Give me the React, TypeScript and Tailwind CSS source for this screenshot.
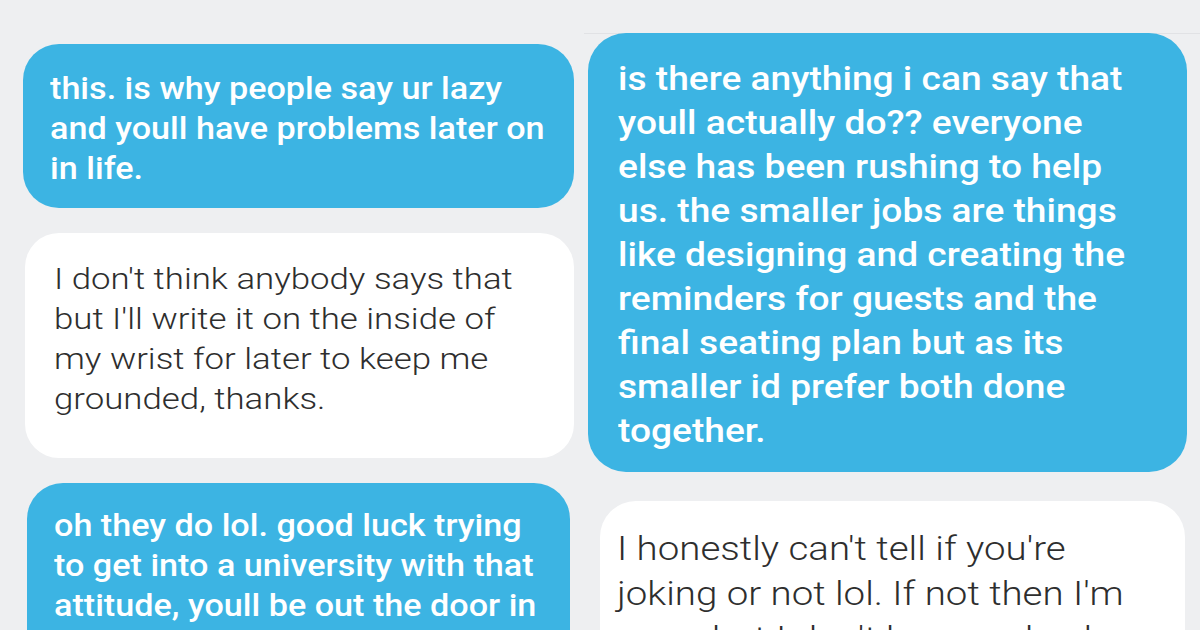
const leftTop = ['this. is why people say ur lazy', 'and youll have problems later on', 'in life.'];
const leftReply = [
  "I don't think anybody says that",
  "but I'll write it on the inside of",
  'my wrist for later to keep me',
  'grounded, thanks.',
];
const leftBottom = ['oh they do lol. good luck trying', 'to get into a university with that', 'attitude, youll be out the door in'];
const rightTop = [
  'is there anything i can say that',
  'youll actually do?? everyone',
  'else has been rushing to help',
  'us. the smaller jobs are things',
  'like designing and creating the',
  'reminders for guests and the',
  'final seating plan but as its',
  'smaller id prefer both done',
  'together.',
];
const rightReply = ["I honestly can't tell if you're", "joking or not lol. If not then I'm", "sorry but I don't have a clue how"];

// the screenshot is stretched sideways, so each line gets a horizontal scale
function Lines({ lines, stretch }: { lines: string[]; stretch: string }) {
  return (
    <>
      {lines.map((l, i) => (
        <span key={i} className={`block whitespace-nowrap origin-left ${stretch}`}>
          {l}
        </span>
      ))}
    </>
  );
}

export default function App() {
  return (
    <div className="w-[1200px] h-[630px] overflow-hidden bg-[#eeeff1] flex items-start font-['Roboto',sans-serif]">
      {/* left column */}
      <div className="w-[584px] shrink-0 pl-[23px] pr-[10px] pt-[44px] flex flex-col gap-[25px]">
        <div className="w-[551px] rounded-[36px] bg-[#3cb4e3] text-white font-medium text-[30.5px] leading-[40px] pl-[27px] pt-[25px] pb-[19px]">
          <Lines lines={leftTop} stretch="scale-x-[1.12]" />
        </div>
        <div className="ml-[2px] w-[549px] rounded-[34px] bg-white text-[#2e2e2e] font-light text-[30px] leading-[40px] pl-[29px] pt-[26px] pb-[39px]">
          <Lines lines={leftReply} stretch="scale-x-[1.16]" />
        </div>
        <div className="ml-[4px] w-[543px] rounded-[36px] bg-[#3cb4e3] text-white font-medium text-[30.5px] leading-[40px] pl-[27px] pt-[23px] pb-[40px]">
          <Lines lines={leftBottom} stretch="scale-x-[1.12]" />
        </div>
      </div>

      {/* right column */}
      <div className="flex-1 mt-[33px] border-t border-[#e1e2e5] pl-[4px] pr-[13px] flex flex-col gap-[29px]">
        <div className="-mt-px w-[599px] rounded-[38px] bg-[#3cb4e3] text-white font-medium text-[33px] leading-[44px] pl-[30px] pt-[24px] pb-[19px]">
          <Lines lines={rightTop} stretch="scale-x-[1.125]" />
        </div>
        <div className="ml-[12px] w-[585px] rounded-[36px] bg-white text-[#2e2e2e] font-light text-[33px] leading-[45px] pl-[17px] pt-[25px] pb-[30px]">
          <Lines lines={rightReply} stretch="scale-x-[1.165]" />
        </div>
      </div>
    </div>
  );
}
